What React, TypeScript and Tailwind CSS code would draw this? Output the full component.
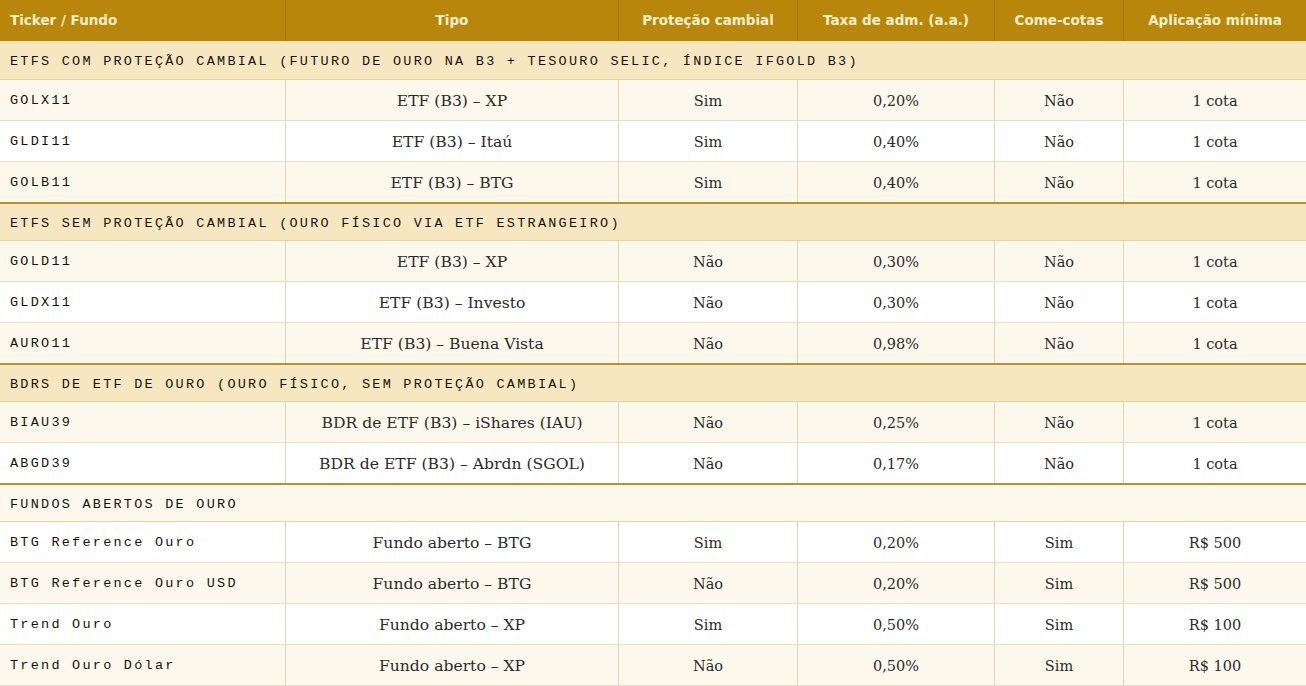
import React from "react";

type Row = { t: string; tipo: string; p: string; taxa: string; cc: string; ap: string; bg: string };
type Section = { title: string; bg: string; rows: Row[] };

const C = "bg-[#fdf8ec]";
const W = "bg-white";

const sections: Section[] = [
  {
    title: "ETFS COM PROTEÇÃO CAMBIAL (FUTURO DE OURO NA B3 + TESOURO SELIC, ÍNDICE IFGOLD B3)",
    bg: "bg-[#f6e7c1]",
    rows: [
      { t: "GOLX11", tipo: "ETF (B3) – XP", p: "Sim", taxa: "0,20%", cc: "Não", ap: "1 cota", bg: C },
      { t: "GLDI11", tipo: "ETF (B3) – Itaú", p: "Sim", taxa: "0,40%", cc: "Não", ap: "1 cota", bg: W },
      { t: "GOLB11", tipo: "ETF (B3) – BTG", p: "Sim", taxa: "0,40%", cc: "Não", ap: "1 cota", bg: C },
    ],
  },
  {
    title: "ETFS SEM PROTEÇÃO CAMBIAL (OURO FÍSICO VIA ETF ESTRANGEIRO)",
    bg: "bg-[#f6e7c1]",
    rows: [
      { t: "GOLD11", tipo: "ETF (B3) – XP", p: "Não", taxa: "0,30%", cc: "Não", ap: "1 cota", bg: C },
      { t: "GLDX11", tipo: "ETF (B3) – Investo", p: "Não", taxa: "0,30%", cc: "Não", ap: "1 cota", bg: W },
      { t: "AURO11", tipo: "ETF (B3) – Buena Vista", p: "Não", taxa: "0,98%", cc: "Não", ap: "1 cota", bg: C },
    ],
  },
  {
    title: "BDRS DE ETF DE OURO (OURO FÍSICO, SEM PROTEÇÃO CAMBIAL)",
    bg: "bg-[#f6e7c1]",
    rows: [
      { t: "BIAU39", tipo: "BDR de ETF (B3) – iShares (IAU)", p: "Não", taxa: "0,25%", cc: "Não", ap: "1 cota", bg: C },
      { t: "ABGD39", tipo: "BDR de ETF (B3) – Abrdn (SGOL)", p: "Não", taxa: "0,17%", cc: "Não", ap: "1 cota", bg: W },
    ],
  },
  {
    title: "FUNDOS ABERTOS DE OURO",
    bg: C,
    rows: [
      { t: "BTG Reference Ouro", tipo: "Fundo aberto – BTG", p: "Sim", taxa: "0,20%", cc: "Sim", ap: "R$ 500", bg: W },
      { t: "BTG Reference Ouro USD", tipo: "Fundo aberto – BTG", p: "Não", taxa: "0,20%", cc: "Sim", ap: "R$ 500", bg: C },
      { t: "Trend Ouro", tipo: "Fundo aberto – XP", p: "Sim", taxa: "0,50%", cc: "Sim", ap: "R$ 100", bg: W },
      { t: "Trend Ouro Dólar", tipo: "Fundo aberto – XP", p: "Não", taxa: "0,50%", cc: "Sim", ap: "R$ 100", bg: C },
    ],
  },
];

const grid = "grid grid-cols-[286px_333px_179px_197px_129px_1fr]";
const mono = "font-['Liberation_Mono','Courier_New',monospace] text-[13.5px] tracking-[2.25px] text-[#17130a]";
const serif = "font-['DejaVu_Serif',Georgia,serif] text-[#2b2b2b]";

export default function App() {
  const headers = ["Ticker / Fundo", "Tipo", "Proteção cambial", "Taxa de adm. (a.a.)", "Come-cotas", "Aplicação mínima"];
  return (
    <div className="w-[1306px] h-[686px] overflow-hidden bg-white">
      <div className={`${grid} h-[41px] bg-[#b8860b] font-['DejaVu_Sans',Verdana,Tahoma,sans-serif]`}>
        {headers.map((h, i) => (
          <div
            key={h}
            className={`flex items-center text-[13.5px] font-bold text-[#fdf0cc] ${i === 0 ? "justify-start pl-[10px]" : "justify-center"} ${i < 5 ? "border-r border-[#a47609]" : ""}`}
          >
            {h}
          </div>
        ))}
      </div>
      {sections.map((s, si) => (
        <div key={s.title}>
          <div
            className={`flex items-center pl-[10px] pt-[4px] h-[39px] border-b border-[#e3d2a3] ${si === 0 ? "" : "border-t-2 border-t-[#b8912e]"} ${s.bg} ${mono}`}
          >
            {s.title}
          </div>
          {s.rows.map((r, ri) => {
            const last = ri === s.rows.length - 1 && si < sections.length - 1;
            return (
              <div
                key={r.t}
                className={`${grid} ${r.bg} ${last ? "h-[40px]" : "h-[41px] border-b border-[#eadfc0]"}`}
              >
                <div className={`flex items-center pl-[10px] pt-[3px] border-r border-[#e3d5ae] ${mono}`}>{r.t}</div>
                {[r.tipo, r.p, r.taxa, r.cc, r.ap].map((v, k) => (
                  <div
                    key={k}
                    className={`flex items-center justify-center pt-[3px] ${serif} ${k === 0 ? "text-[15.6px]" : "text-[14.5px]"} ${k < 4 ? "border-r border-[#e3d5ae]" : ""}`}
                  >
                    {v}
                  </div>
                ))}
              </div>
            );
          })}
        </div>
      ))}
    </div>
  );
}
